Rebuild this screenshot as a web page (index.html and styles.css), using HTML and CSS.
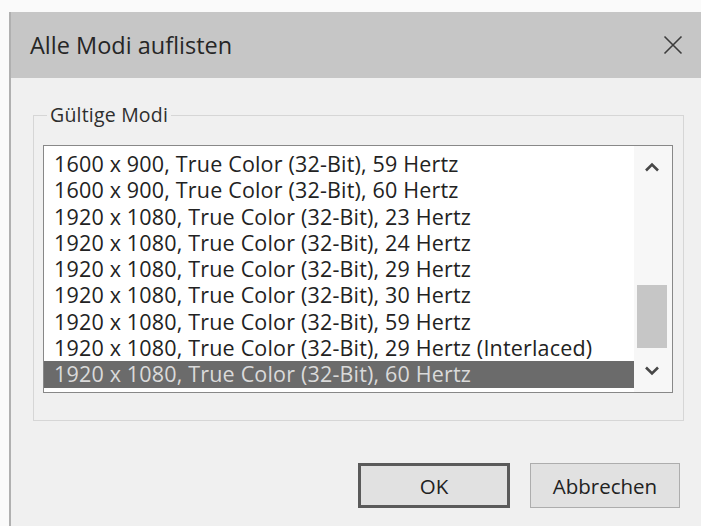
FILE: index.html
```html
<!DOCTYPE html>
<html lang="de">
<head>
<meta charset="utf-8">
<title>Alle Modi auflisten</title>
<link rel="stylesheet" href="styles.css">
</head>
<body>
<div class="dialog">
  <div class="titlebar">
    <span class="title">Alle Modi auflisten</span>
    <svg class="close" width="20" height="20" viewBox="0 0 20 20" aria-label="Schließen">
      <path d="M1.5 1.5 L18.5 18.5 M18.5 1.5 L1.5 18.5" stroke="#3c3c3c" stroke-width="1.6" fill="none"/>
    </svg>
  </div>
  <div class="body">
    <fieldset class="group">
      <legend class="group-label">Gültige Modi</legend>
      <div class="listbox">
        <ul class="items">
          <li class="item">1600 x 900, True Color (32-Bit), 59 Hertz</li>
          <li class="item">1600 x 900, True Color (32-Bit), 60 Hertz</li>
          <li class="item">1920 x 1080, True Color (32-Bit), 23 Hertz</li>
          <li class="item">1920 x 1080, True Color (32-Bit), 24 Hertz</li>
          <li class="item">1920 x 1080, True Color (32-Bit), 29 Hertz</li>
          <li class="item">1920 x 1080, True Color (32-Bit), 30 Hertz</li>
          <li class="item">1920 x 1080, True Color (32-Bit), 59 Hertz</li>
          <li class="item">1920 x 1080, True Color (32-Bit), 29 Hertz (Interlaced)</li>
          <li class="item selected">1920 x 1080, True Color (32-Bit), 60 Hertz</li>
        </ul>
        <div class="scrollbar">
          <div class="sb-btn">
            <svg width="16" height="10" viewBox="0 0 16 10"><path d="M2 8.5 L8 2.5 L14 8.5" stroke="#474747" stroke-width="2.6" fill="none"/></svg>
          </div>
          <div class="track"><div class="thumb"></div></div>
          <div class="sb-btn">
            <svg width="16" height="10" viewBox="0 0 16 10"><path d="M2 1.5 L8 7.5 L14 1.5" stroke="#474747" stroke-width="2.6" fill="none"/></svg>
          </div>
        </div>
      </div>
    </fieldset>
    <div class="buttons">
      <button class="btn btn-default">OK</button>
      <button class="btn">Abbrechen</button>
    </div>
  </div>
</div>
</body>
</html>
```
FILE: styles.css
```css
html, body {
  margin: 0;
  padding: 0;
}
body {
  background: #fafafa;
  font-family: "Open Sans", "Noto Sans", sans-serif;
  color: #222;
  overflow: hidden;
}
.dialog {
  margin: 12px 0 0 9px;
  height: 514px;
  background: #f0f0f0;
  border-left: 2px solid #b0b0b0;
  display: flex;
  flex-direction: column;
}
.titlebar {
  height: 66px;
  flex: none;
  background: #c6c6c6;
  display: flex;
  align-items: center;
  justify-content: space-between;
  padding: 0 18px 0 19px;
}
.title {
  font-size: 23.5px;
  color: #262626;
}
.close {
  display: block;
}
.body {
  flex: 1;
  padding: 27px 17px 0 22px;
}
.group {
  margin: 0;
  border: 1px solid #d6d6d6;
  padding: 20px 10px 27px 9px;
}
.group-label {
  font-size: 19.5px;
  line-height: 20px;
  padding: 0 3px;
  margin-left: 4px;
  letter-spacing: 0.2px;
  color: #2e2e2e;
}
.listbox {
  box-sizing: border-box;
  height: 248px;
  border: 1px solid #888;
  background: #fff;
  display: flex;
}
.items {
  flex: 1;
  margin: 0;
  padding: 5px 0 0 0;
  list-style: none;
  overflow: hidden;
}
.item {
  height: 26.3px;
  line-height: 26.3px;
  padding-left: 10px;
  font-size: 21.5px;
  letter-spacing: 0.18px;
  white-space: nowrap;
  color: #222;
}
.item.selected {
  background: #6b6b6b;
  color: #dadada;
}
.scrollbar {
  width: 35px;
  padding-right: 3px;
  background: #f7f7f7;
  display: flex;
  flex-direction: column;
}
.sb-btn {
  height: 42px;
  flex: none;
  display: flex;
  align-items: center;
  justify-content: center;
}
.track {
  flex: 1;
  display: flex;
  flex-direction: column;
  justify-content: flex-end;
  align-items: center;
}
.thumb {
  width: 30px;
  height: 63px;
  margin-bottom: 2px;
  background: #c6c6c6;
}
.buttons {
  margin-top: 42px;
  display: flex;
  justify-content: flex-end;
  gap: 20px;
  padding-right: 4px;
}
.btn {
  box-sizing: border-box;
  width: 150px;
  height: 45px;
  background: #e1e1e1;
  border: 1px solid #adadad;
  font-family: "Open Sans", "Noto Sans", sans-serif;
  font-size: 20.5px;
  color: #222;
  padding: 0;
}
.btn-default {
  width: 152px;
  border: 3px solid #5a5a5a;
}
```
